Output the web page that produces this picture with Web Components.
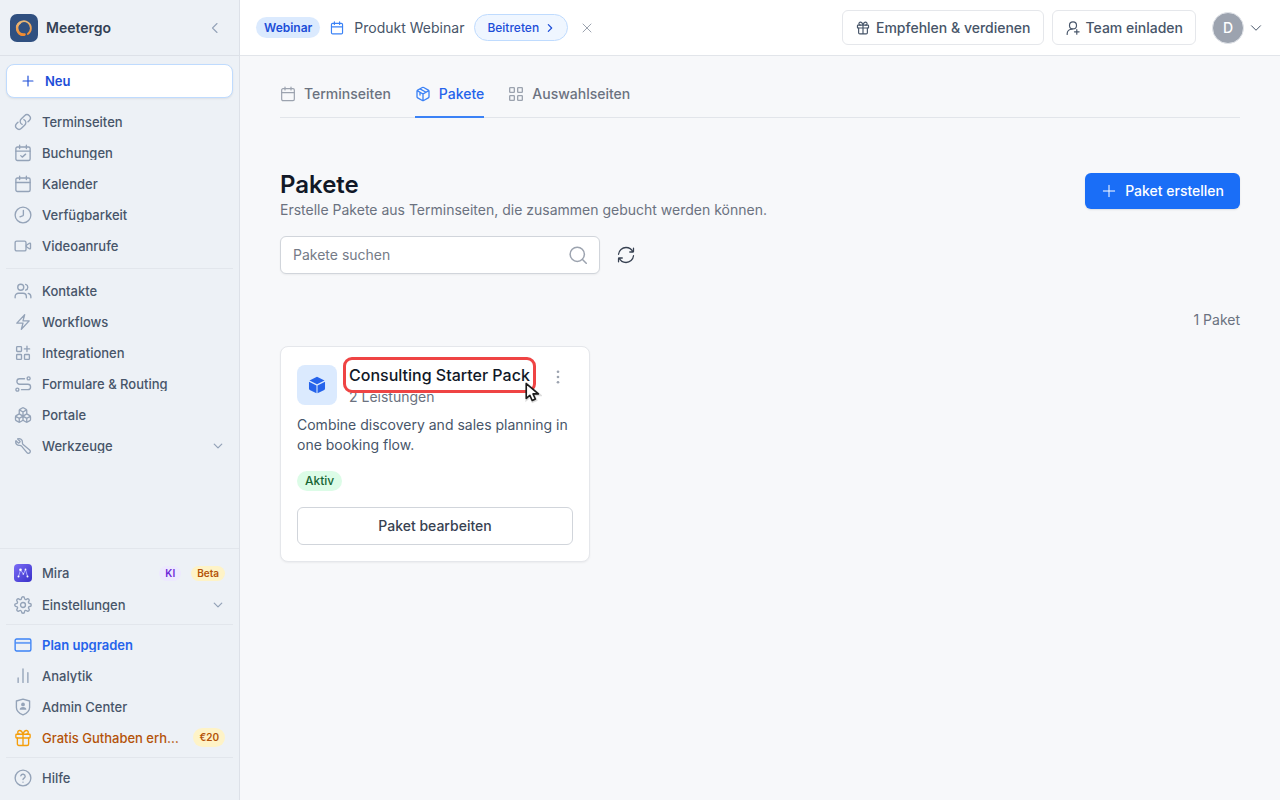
<!DOCTYPE html>
<html lang="de">
<head>
<meta charset="utf-8">
<meta name="viewport" content="width=device-width, initial-scale=1">
<title>Pakete – Meetergo</title>
<style>
  html, body { margin: 0; min-height: 100%; }
  body { font-family: Inter, "Liberation Sans", sans-serif; font-size: 14px; line-height: 20px; color: #475569; background: #f7f8fa; }
</style>
</head>
<body>
<meet-app></meet-app>

<script>
const ICONS = {
  link: '<path d="M13.19 8.688a4.5 4.5 0 0 1 1.242 7.244l-4.5 4.5a4.5 4.5 0 0 1-6.364-6.364l1.757-1.757m13.35-.622 1.757-1.757a4.5 4.5 0 0 0-6.364-6.364l-4.5 4.5a4.5 4.5 0 0 0 1.242 7.244"/>',
  calendar: '<rect x="2.5" y="4" width="19" height="18" rx="2"/><path d="M16.5 1.5V6M7.500 1.5V6M2.500 10h19"/>',
  calendarCheck: '<rect x="2.500" y="4" width="19" height="18" rx="2"/><path d="M16.500 1.500V6M7.500 1.500V6M2.500 9.500h19M9 15.500l2 2 4.500-4"/>',
  clock: '<circle cx="12" cy="12" r="10.500"/><path d="M12.500 6v5.500a2 2 0 0 1-1.200 1.800L8 14.500"/>',
  video: '<rect x="1.500" y="5.500" width="14.500" height="13" rx="2"/><path d="m16.500 11 4-2.700a1 1 0 0 1 1.500.8v5.800a1 1 0 0 1-1.500.8l-4-2.700z"/>',
  users: '<circle cx="9" cy="7" r="4"/><path d="M1.500 21v-1.500a4.500 4.500 0 0 1 4.500-4.500h6a4.500 4.500 0 0 1 4.500 4.500V21M15.500 3.200a4 4 0 0 1 0 7.700M19 15.200a4.500 4.500 0 0 1 3.500 4.300V21"/>',
  bolt: '<path d="m3.750 13.500 10.500-11.250L12 10.500h8.250L9.750 21.750 12 13.500H3.750Z"/>',
  apps: '<rect x="3.500" y="3.500" width="6.500" height="6.500" rx="1"/><rect x="3.500" y="14" width="6.500" height="6.500" rx="1"/><rect x="14" y="14" width="6.500" height="6.500" rx="1"/><path d="M17.300 3v7M13.800 6.500h7"/>',
  route: '<circle cx="4.500" cy="19.500" r="2"/><circle cx="19.500" cy="4.500" r="2"/><path d="M10 19.500h8.500a3.500 3.500 0 0 0 0-7.200h-11a3.500 3.500 0 0 1 0-7.300H14"/>',
  boxes: '<path d="M2.970 12.920A2 2 0 0 0 2 14.630v3.240a2 2 0 0 0 .97 1.710l3 1.800a2 2 0 0 0 2.060 0L12 19v-5.500l-5-3-4.030 2.420ZM7 16.500l-4.740-2.850M7 16.500l5-3M7 16.500v5.170M12 13.500V19l3.970 2.380a2 2 0 0 0 2.060 0l3-1.800a2 2 0 0 0 .97-1.710v-3.240a2 2 0 0 0-.97-1.710L17 10.500l-5 3ZM17 16.500l-5-3M17 16.500l4.740-2.850M17 16.500v5.170M7.970 4.420A2 2 0 0 0 7 6.130v4.370l5 3 5-3V6.130a2 2 0 0 0-.97-1.710l-3-1.800a2 2 0 0 0-2.060 0l-3 1.800ZM12 8 7.260 5.150M12 8l4.740-2.850M12 13.500V8"/>',
  wrench: '<path transform="matrix(-1 0 0 1 24 0)" d="M21.750 6.750a4.500 4.500 0 0 1-4.884 4.484c-1.076-.091-2.264.071-2.950.904l-7.152 8.684a2.548 2.548 0 1 1-3.586-3.586l8.684-7.152c.833-.686.995-1.874.904-2.950a4.500 4.500 0 0 1 6.336-4.486l-3.276 3.276a3.004 3.004 0 0 0 2.250 2.250l3.276-3.276c.256.565.398 1.192.398 1.852Z"/>',
  gear: '<circle cx="12" cy="12" r="3.300"/><path d="M19.400 15a1.650 1.650 0 0 0 .33 1.820l.06.06a2 2 0 0 1 0 2.830 2 2 0 0 1-2.830 0l-.06-.06a1.650 1.650 0 0 0-1.820-.33 1.650 1.650 0 0 0-1 1.510V21a2 2 0 0 1-2 2 2 2 0 0 1-2-2v-.09A1.650 1.650 0 0 0 9 19.400a1.650 1.650 0 0 0-1.820.33l-.06.06a2 2 0 0 1-2.830 0 2 2 0 0 1 0-2.830l.06-.06a1.650 1.650 0 0 0 .33-1.820 1.650 1.650 0 0 0-1.510-1H3a2 2 0 0 1-2-2 2 2 0 0 1 2-2h.09A1.650 1.650 0 0 0 4.600 9a1.650 1.650 0 0 0-.33-1.820l-.06-.06a2 2 0 0 1 0-2.830 2 2 0 0 1 2.830 0l.06.06a1.650 1.650 0 0 0 1.820.33H9a1.650 1.650 0 0 0 1-1.510V3a2 2 0 0 1 2-2 2 2 0 0 1 2 2v.09a1.650 1.650 0 0 0 1 1.510 1.650 1.650 0 0 0 1.820-.33l.06-.06a2 2 0 0 1 2.830 0 2 2 0 0 1 0 2.830l-.06.06a1.650 1.650 0 0 0-.33 1.820V9a1.650 1.650 0 0 0 1.510 1H21a2 2 0 0 1 2 2 2 2 0 0 1-2 2h-.09a1.650 1.650 0 0 0-1.510 1z"/>',
  card: '<rect x="1.500" y="4" width="21" height="16" rx="2"/><path d="M2 9.200h20" stroke-width="2.600" stroke-linecap="butt" opacity=".7"/>',
  bars: '<path d="M5.500 20.500v-6M12 20.500v-18M18.500 20.500v-13"/>',
  shield: '<path d="M12 1.500 20.800 4v8.500c0 4.800-4 7.800-8.800 10-4.800-2.200-8.800-5.200-8.800-10V4z"/><circle cx="12" cy="8.500" r="2.500" fill="currentColor" stroke="none"/><path d="M7.500 15.800c0-2.800 2-3.800 4.500-3.800s4.500 1 4.500 3.800z" fill="currentColor" stroke="none"/>',
  gift: '<rect x="2.500" y="7" width="19" height="5" rx="1"/><path d="M12 7v15M19.500 12v8a2 2 0 0 1-2 2h-11a2 2 0 0 1-2-2v-8M12 7C11 3.500 9.500 2 7.500 2a2.500 2.500 0 0 0 0 5M12 7c1-3.500 2.500-5 4.500-5a2.500 2.500 0 0 1 0 5"/>',
  help: '<circle cx="12" cy="12" r="10.500"/><path d="M9.090 9a3 3 0 0 1 5.830 1c0 2-2.900 2.200-2.900 4M12 17.500h.01"/>',
  pack: '<path d="M21 16V8a2 2 0 0 0-1-1.730l-7-4a2 2 0 0 0-2 0l-7 4A2 2 0 0 0 3 8v8a2 2 0 0 0 1 1.730l7 4a2 2 0 0 0 2 0l7-4A2 2 0 0 0 21 16zM3.300 7l8.700 5 8.700-5M12 22V12M16.500 9.400 7.500 4.300M7.500 9.500v4"/>',
  grid: '<rect x="2.500" y="2.500" width="7" height="7" rx="1"/><rect x="14.500" y="2.500" width="7" height="7" rx="1"/><rect x="2.500" y="14.500" width="7" height="7" rx="1"/><rect x="14.500" y="14.500" width="7" height="7" rx="1"/>',
  userPlus: '<circle cx="12" cy="7.500" r="6"/><path d="M2 23v-1c0-4.500 3.500-8 8.500-8M18.500 14.500v8M14.500 18.500h8"/>',
  refresh: '<path d="M21.168 8A10.003 10.003 0 0 0 12 2C6.815 2 2.550 5.947 2.050 11M17 8h4.400a.6.6 0 0 0 .6-.6V3M2.881 16c1.544 3.532 5.068 6 9.168 6 5.186 0 9.450-3.947 9.951-9M7.050 16h-4.400a.6.6 0 0 0-.6.6V21"/>',
  search: '<circle cx="11" cy="11" r="9.500"/><path d="m18 18 5 5"/>',
  plus: '<path d="M12 3.500v17M3.500 12h17"/>',
  close: '<path d="m4 4 16 16M20 4 4 20"/>',
  left: '<path d="m16 3-9 9 9 9"/>',
  right: '<path d="m8 4 8 8-8 8"/>',
  down: '<path d="m3 7.500 9 9 9-9"/>',
  dots: '<g fill="currentColor" stroke="none"><circle cx="12" cy="3" r="2.300"/><circle cx="12" cy="12" r="2.300"/><circle cx="12" cy="21" r="2.300"/></g>',
  cube: '<g fill="currentColor" stroke="none"><path d="M12 1 22 6 12 11 2 6z"/><path d="M1.300 7.700 11.300 12.700V23L2.300 18.500a2 2 0 0 1-1-1.800zM22.700 7.700l-10 5V23l9-4.500a2 2 0 0 0 1-1.800z"/></g>'
};

/* Base class: builds an open shadow root from a style sheet and markup. */
class Base extends HTMLElement {
  connectedCallback() {
    if (this.shadowRoot) return;
    const t = document.createElement('template');
    t.innerHTML = `<style>*{box-sizing:border-box}a{color:inherit;text-decoration:none}button{font:inherit;color:inherit;margin:0;cursor:pointer}${this.css()}</style>${this.html()}`;
    this.attachShadow({ mode: 'open' }).append(t.content.cloneNode(true));
  }
  css() { return ''; }
  html() { return '<slot></slot>'; }
}

customElements.define('ui-icon', class extends Base {
  css() { return ':host{display:block;flex:none;width:var(--size,18px);height:var(--size,18px)}svg{display:block;width:100%;height:100%}'; }
  html() { return `<svg viewBox="0 0 24 24" fill="none" stroke="currentColor" stroke-width="${this.getAttribute('weight') || '1.5'}" stroke-linecap="round" stroke-linejoin="round" aria-hidden="true">${ICONS[this.getAttribute('name')]}</svg>`; }
});

customElements.define('ui-badge', class extends Base {
  css() { return `
    :host{display:block;flex:none;border-radius:10px;padding:0 8px;font-size:12px;line-height:20px;font-weight:500}
    :host([tone=ki]),:host([tone=beta]),:host([tone=money]){font-weight:600;font-size:10px;line-height:15px;padding:0 6px}
    :host([tone=ki]){background:#ede9fe;color:#6d28d9}
    :host([tone=beta]),:host([tone=money]){background:#fef3c7;color:#b45309}
    :host([tone=money]){line-height:19px}
    :host([tone=active]){background:#dcfce7;color:#166534}
    :host([tone=info]){background:#dbeafe;color:#1d4ed8;font-weight:600;line-height:21px;border-radius:11px}`; }
});

customElements.define('nav-item', class extends Base {
  css() { return `
    :host{display:block;font-size:13px;font-weight:500;color:#475569}
    a{display:flex;align-items:center;gap:10px;height:31px;padding:0 8px}
    ui-icon{color:#94a3b8}
    .label{flex:1;min-width:0;line-height:14px;overflow:hidden;white-space:nowrap;text-overflow:ellipsis}
    .more{--size:10px;margin-right:2px}
    :host([tone=primary]){color:#2563eb;font-weight:600}
    :host([tone=primary]) ui-icon{color:#3b82f6}
    :host([tone=gift]){color:#b45309}
    :host([tone=gift]) ui-icon{color:#f59e0b}
    :host([tone=mira]) a{height:32px}
    .mira{display:block;width:18px;height:18px;flex:none}`; }
  html() {
    const n = this.getAttribute('icon');
    const icon = n === 'mira'
      ? `<svg class="mira" viewBox="0 0 18 18" aria-hidden="true"><defs><linearGradient id="g" x1="0" y1="0" x2="1" y2="1"><stop stop-color="#7c6cf6"/><stop offset="1" stop-color="#3730c8"/></linearGradient></defs><rect width="18" height="18" rx="4" fill="url(#g)"/><path d="M4.500 12.500 6.500 6l3 4 2-4.500 2 7" fill="none" stroke="#a9a8ff"/><g fill="#fff"><circle cx="4.500" cy="12.500" r="1"/><circle cx="6.500" cy="5.800" r="1.300"/><circle cx="9.300" cy="10" r=".8"/><circle cx="11.500" cy="5.500" r=".9"/><circle cx="13.500" cy="12.500" r="1"/></g></svg>`
      : `<ui-icon name="${n}" weight="1.800"></ui-icon>`;
    return `<a href="#">${icon}<span class="label">${this.getAttribute('label')}</span><slot></slot>${this.hasAttribute('more') ? '<ui-icon class="more" name="down" weight="3"></ui-icon>' : ''}</a>`;
  }
});

customElements.define('app-sidebar', class extends Base {
  css() { return `
    :host{display:flex;flex-direction:column;background:#edf1f6;border-right:1px solid #dde1e8}
    header{display:flex;align-items:center;gap:8px;height:56px;padding:0 18px 0 10px;border-bottom:1px solid #dde1e8}
    .logo{width:28px;height:28px;display:block}
    strong{flex:1;font-size:14px;font-weight:600;color:#334155}
    .fold{border:0;background:none;padding:0;color:#94a3b8;--size:12px}
    nav{padding:8px 6px;flex:1}
    nav.foot{flex:none;padding:8px 6px 7px;border-top:1px solid #e2e6ec}
    hr{border:0;height:1px;background:#e2e6ec;margin:7px 0 6px}
    .foot hr{margin:4px 0}
    .new{display:flex;align-items:center;gap:10px;width:100%;height:34px;margin-bottom:8px;padding:0 14px;border:1px solid #bfdbfe;border-radius:8px;background:#fff;color:#1d4ed8;font-size:13px;font-weight:600;box-shadow:0 1px 2px #0f172a14;--size:14px}`; }
  html() { return `
    <header>
      <svg class="logo" viewBox="0 0 28 28" aria-hidden="true"><defs><linearGradient id="o" x1="0" y1="0" x2="0" y2="1"><stop stop-color="#e9b878"/><stop offset="1" stop-color="#f08a30"/></linearGradient></defs><rect width="28" height="28" rx="7" fill="#305080"/><path d="M17.800 20a7 7 0 1 0-3.800 1.200" fill="none" stroke="url(#o)" stroke-width="1.800" stroke-linecap="round"/><path d="M10 8.800a6.400 6.400 0 0 0 4.600 11.600" fill="none" stroke="url(#o)" stroke-width="2.400" stroke-linecap="round"/></svg>
      <strong>Meetergo</strong>
      <button class="fold" aria-label="Seitenleiste einklappen"><ui-icon name="left" weight="2.200"></ui-icon></button>
    </header>
    <nav aria-label="Hauptmenü">
      <button class="new"><ui-icon name="plus" weight="2"></ui-icon>Neu</button>
      <nav-item icon="link" label="Terminseiten"></nav-item>
      <nav-item icon="calendarCheck" label="Buchungen"></nav-item>
      <nav-item icon="calendar" label="Kalender"></nav-item>
      <nav-item icon="clock" label="Verfügbarkeit"></nav-item>
      <nav-item icon="video" label="Videoanrufe"></nav-item>
      <hr>
      <nav-item icon="users" label="Kontakte"></nav-item>
      <nav-item icon="bolt" label="Workflows"></nav-item>
      <nav-item icon="apps" label="Integrationen"></nav-item>
      <nav-item icon="route" label="Formulare &amp;amp; Routing"></nav-item>
      <nav-item icon="boxes" label="Portale"></nav-item>
      <nav-item icon="wrench" label="Werkzeuge" more></nav-item>
    </nav>
    <nav class="foot" aria-label="Konto">
      <nav-item icon="mira" tone="mira" label="Mira"><ui-badge tone="ki">KI</ui-badge><ui-badge tone="beta">Beta</ui-badge></nav-item>
      <nav-item icon="gear" label="Einstellungen" more></nav-item>
      <hr>
      <nav-item icon="card" tone="primary" label="Plan upgraden"></nav-item>
      <nav-item icon="bars" label="Analytik"></nav-item>
      <nav-item icon="shield" label="Admin Center"></nav-item>
      <nav-item icon="gift" tone="gift" label="Gratis Guthaben erh…"><ui-badge tone="money">€20</ui-badge></nav-item>
      <hr>
      <nav-item icon="help" label="Hilfe"></nav-item>
    </nav>`; }
});

customElements.define('app-topbar', class extends Base {
  css() { return `
    :host{display:flex;align-items:center;justify-content:space-between;height:56px;padding:0 18px 0 16px;background:#fff;border-bottom:1px solid #e2e5ea}
    div{display:flex;align-items:center}
    .event{gap:10px}
    .event>ui-icon{--size:14px;color:#3b82f6}
    .join{display:flex;align-items:center;gap:6px;height:27px;padding:0 12px;border:1px solid #bfdbfe;border-radius:14px;background:#eff6ff;color:#1d4ed8;font-size:12px;font-weight:500;--size:10px}
    .close{border:0;background:none;padding:3px;color:#9ca3af;--size:12px}
    .actions{gap:8px}
    .box{display:flex;align-items:center;gap:6px;height:35px;padding:0 12px 0 13px;border:1px solid #e5e7eb;border-radius:6px;background:#fff;font-weight:500;--size:14px}
    .user{display:flex;align-items:center;gap:6px;margin-left:8px;padding:0;border:0;background:none;--size:12px}
    .user span{width:32px;height:32px;border:1px solid #e2e5ea;border-radius:50%;background:#9ca3af;color:#fff;line-height:30px;font-weight:500}`; }
  html() { return `
    <div class="event"><ui-badge tone="info">Webinar</ui-badge><ui-icon name="calendar" weight="2"></ui-icon><span>Produkt Webinar</span>
      <button class="join">Beitreten<ui-icon name="right" weight="3"></ui-icon></button>
      <button class="close" aria-label="Schließen"><ui-icon name="close" weight="2"></ui-icon></button></div>
    <div class="actions"><button class="box"><ui-icon name="gift" weight="2"></ui-icon>Empfehlen &amp; verdienen</button>
      <button class="box"><ui-icon name="userPlus" weight="2"></ui-icon>Team einladen</button>
      <button class="user" aria-label="Konto"><span>D</span><ui-icon name="down" weight="2"></ui-icon></button></div>`; }
});

customElements.define('page-tabs', class extends Base {
  css() { return `
    :host{display:flex;gap:24px;box-shadow:inset 0 -1px #e2e5ea;color:#6b7280;font-weight:500;--size:16px}
    a{display:flex;align-items:center;gap:8px;padding-bottom:12px;border-bottom:2px solid transparent}
    ui-icon{color:#9ca3af}
    [aria-current]{color:#2563eb;border-color:#3b82f6}
    [aria-current] ui-icon{color:#3b82f6}`; }
  html() { return `
    <a href="#"><ui-icon name="calendar" weight="1.800"></ui-icon>Terminseiten</a>
    <a href="#" aria-current="page"><ui-icon name="pack" weight="2"></ui-icon>Pakete</a>
    <a href="#"><ui-icon name="grid" weight="2"></ui-icon>Auswahlseiten</a>`; }
});

customElements.define('package-card', class extends Base {
  css() { return `
    :host{display:block;padding:16px;background:#fff;border:1px solid #e5e7eb;border-radius:8px;box-shadow:0 1px 2px #0000000d}
    .head{display:flex;gap:12px}
    .tile{display:grid;place-items:center;width:40px;height:40px;margin-top:2px;border-radius:8px;background:#dbeafe;color:#2563eb}
    .text{flex:1;color:#6b7280}
    h2{position:relative;width:max-content;margin:0;font-size:16px;line-height:24px;font-weight:500;color:#111827}
    .ring{position:absolute;inset:-6px;border:3px solid #ef4444;border-radius:9px}
    .pointer{position:absolute;right:-12px;bottom:-17px;width:18px;height:22px}
    .menu{align-self:flex-start;width:30px;height:28px;padding:0;border:0;background:none;color:#9ca3af;display:grid;place-items:center;--size:14px}
    p{margin:8px 0 16px}
    ui-badge{width:max-content}
    .edit{width:100%;height:38px;margin-top:16px;border:1px solid #d1d5db;border-radius:6px;background:#fff;font-weight:500;color:#374151}`; }
  html() { return `
    <div class="head"><div class="tile"><ui-icon name="cube"></ui-icon></div>
      <div class="text"><h2><slot name="title"></slot><span class="ring"></span>
        <svg class="pointer" viewBox="0 0 20 24" aria-hidden="true"><path d="M3 2v17l4-3.500 2.700 6 3.600-1.600-2.600-5.900H17z" fill="#0003" stroke="#0002" stroke-width="3" /><path d="M2.500 1.500v16.500l4-3.500 2.600 5.800 3.500-1.600L10 13h6z" fill="#fff" stroke="#1b1b1b" stroke-width="1.800" stroke-linejoin="round"/></svg></h2>
        <slot name="count"></slot></div>
      <button class="menu" aria-label="Optionen"><ui-icon name="dots"></ui-icon></button></div>
    <p><slot></slot></p>
    <ui-badge tone="active">Aktiv</ui-badge>
    <button class="edit">Paket bearbeiten</button>`; }
});

customElements.define('packages-page', class extends Base {
  css() { return `
    :host{display:block;padding:28px 40px}
    .title{display:flex;align-items:center;justify-content:space-between;gap:24px;margin-top:52px}
    h1{margin:0;font-size:24px;line-height:30px;font-weight:600;color:#111827}
    p{margin:0;color:#6b7280}
    .create{display:flex;align-items:center;gap:8px;height:36px;margin-bottom:8px;padding:0 16px;border:0;border-radius:6px;background:#1a6ef7;color:#fff;font-weight:500;box-shadow:0 1px 2px #0000001a;--size:16px}
    .tools{display:flex;align-items:center;gap:17px;margin-top:16px}
    .field{display:flex;align-items:center;width:320px;height:38px;padding:0 12px;background:#fff;border:1px solid #d1d5db;border-radius:6px;color:#9ca3af;box-shadow:0 1px 2px #0000000d;--size:18px}
    input{flex:1;min-width:0;padding:0;border:0;outline:0;background:none;font:inherit;color:#111827}
    input::placeholder{color:#757b87;opacity:1}
    .refresh{padding:0;border:0;background:none;color:#374151;--size:18px}
    .count{margin-top:36px;text-align:right}
    .cards{display:grid;grid-template-columns:repeat(auto-fill,minmax(290px,1fr));gap:15px;margin-top:16px}`; }
  html() { return `
    <page-tabs></page-tabs>
    <section class="title"><div><h1>Pakete</h1><p>Erstelle Pakete aus Terminseiten, die zusammen gebucht werden können.</p></div>
      <button class="create"><ui-icon name="plus"></ui-icon>Paket erstellen</button></section>
    <div class="tools"><label class="field"><input type="text" placeholder="Pakete suchen" aria-label="Pakete suchen"><ui-icon name="search" weight="2"></ui-icon></label>
      <button class="refresh" aria-label="Aktualisieren"><ui-icon name="refresh" weight="1.700"></ui-icon></button></div>
    <p class="count">1 Paket</p>
    <div class="cards"><package-card><span slot="title">Consulting Starter Pack</span><span slot="count">2 Leistungen</span>Combine discovery and sales planning in one booking flow.</package-card></div>`; }
});

customElements.define('meet-app', class extends Base {
  css() { return `
    :host{display:grid;grid-template-columns:240px minmax(0,1fr);min-height:100vh}`; }
  html() { return `
    <app-sidebar></app-sidebar>
    <main><app-topbar></app-topbar><packages-page></packages-page></main>`; }
});
</script>
</body>
</html>
